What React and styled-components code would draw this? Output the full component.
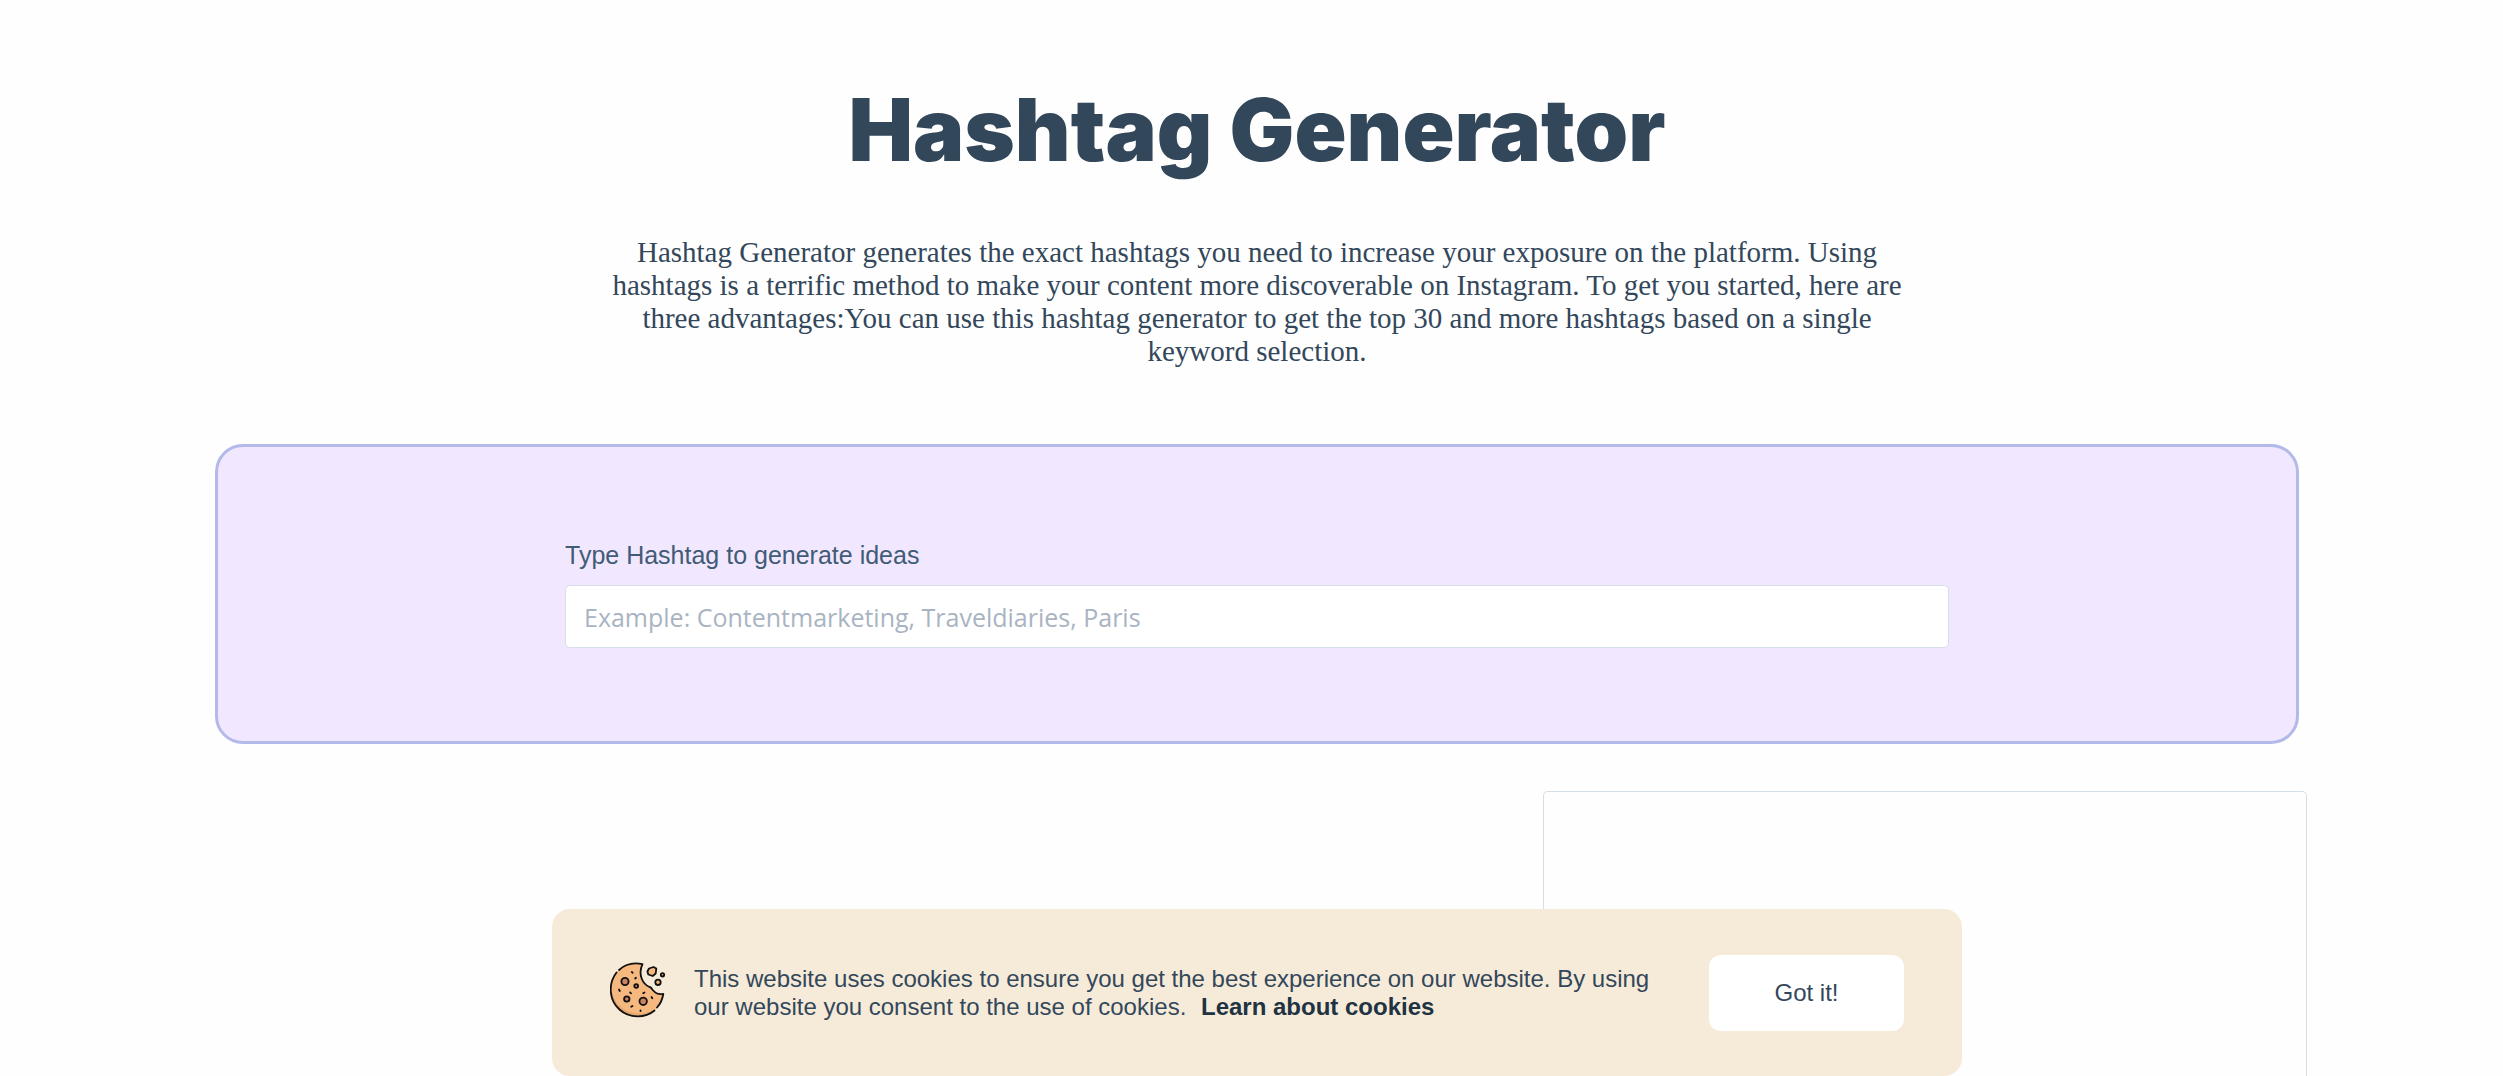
import { useState } from "react";
import styled, { createGlobalStyle } from "styled-components";

const GlobalStyle = createGlobalStyle`
  * {
    box-sizing: border-box;
  }

  body {
    margin: 0;
    background: #fefefe;
    color: #33475b;
    font-family: "Liberation Sans", Arial, sans-serif;
  }
`;

const Page = styled.div`
  height: 100vh;
  padding-left: 11px;
  display: flex;
  flex-direction: column;
  overflow: hidden;
`;

const Header = styled.header`
  display: flex;
  flex-direction: column;
  align-items: center;
  gap: 52px;
  padding: 76px 24px;
  text-align: center;
`;

const Title = styled.h1`
  margin: 0;
  font-family: Inter, "Liberation Sans", sans-serif;
  font-size: 86px;
  font-weight: 900;
  line-height: 108px;
`;

const Desc = styled.p`
  margin: 0;
  max-width: 1320px;
  font-family: "Liberation Serif", "Times New Roman", serif;
  font-size: 29px;
  line-height: 33px;
`;

const Main = styled.main`
  flex: 1;
  display: flex;
  flex-direction: column;
  gap: 47px;
  width: 100%;
  max-width: 2100px;
  margin: 0 auto;
`;

const Panel = styled.section`
  display: flex;
  justify-content: center;
  margin: 0 8px;
  padding: 92px 24px 93px;
  background: #f1e8ff;
  border: 3px solid #b3b9e8;
  border-radius: 28px;
`;

const Form = styled.form`
  display: flex;
  flex-direction: column;
  gap: 14px;
  width: 100%;
  max-width: 1384px;
`;

const Label = styled.label`
  color: #425b76;
  font-size: 25px;
  line-height: 32px;
`;

const Input = styled.input`
  width: 100%;
  height: 63px;
  padding: 4px 18px;
  border: 1px solid #d6dfe8;
  border-radius: 5px;
  background: white;
  color: #33475b;
  font-family: "Open Sans", sans-serif;
  font-size: 25px;

  &::placeholder {
    color: #a9b4c2;
    opacity: 1;
  }
`;

const Columns = styled.div`
  flex: 1;
  display: grid;
  grid-template-columns: 1fr 764px;
`;

const Results = styled.aside`
  grid-column: 2;
  border: 1px solid #d6dfe8;
  border-bottom: none;
  border-radius: 5px 5px 0 0;
`;

const CookieLayer = styled.div`
  position: fixed;
  inset: auto 0 0 11px;
  display: flex;
  justify-content: center;
`;

const CookieBar = styled.div`
  display: flex;
  align-items: center;
  width: 100%;
  max-width: 1410px;
  min-height: 167px;
  padding: 0 58px;
  border-radius: 18px;
  background: #f6ebd8;
`;

const CookieIcon = styled.svg`
  flex: none;
  width: 56px;
  height: 56px;
  margin: 0 28px 6px 0;
`;

const CookieText = styled.p`
  flex: 1;
  margin: 0;
  font-size: 24px;
  line-height: 28px;
`;

const CookieLink = styled.a`
  margin-left: 8px;
  color: #213343;
  font-weight: 700;
  text-decoration: none;
`;

const Button = styled.button`
  width: 195px;
  height: 76px;
  margin-left: 32px;
  border: none;
  border-radius: 12px;
  background: white;
  color: #33475b;
  font-family: inherit;
  font-size: 24px;
  cursor: pointer;
`;

function Cookie() {
  return (
    <CookieIcon viewBox="1 0 56 56" fill="none" aria-hidden="true">
      <path
        d="M33.5 2.2C18-1.5 3 9 1.300 25c-1.500 16 10.500 29.500 26.500 29.500C42 54.500 53 45 54.300 32c-4 .7-8-.7-10.300-3.700-1.300-1.800-1.800-3-3.500-3.300C34 22.500 28.500 12.500 33.500 2.200Z"
        fill="#f5b97f"
      />
      <path
        d="M5.500 14C1 23 2 35 10 43c9 9 23 11 34 5-13 11-31 7-39-5C-.5 34-.5 22 5.500 14Z"
        fill="#e6a873"
      />
      <g stroke="#111" strokeWidth="1.8" strokeLinecap="round" strokeLinejoin="round">
        <path d="M10 8C16 2.500 24.500.3 33.500 2.200 28.500 12.500 34 22.500 40.500 25c1.700.3 2.200 1.500 3.500 3.300 2.300 3 6.300 4.400 10.300 3.700-.8 5.200-3.100 10-6.300 13.500" />
        <path d="M45.500 48.500C36 56.500 20.500 56.500 10.500 47.500 0 38 -1.200 22 7.500 10.500" />
        <circle cx="16" cy="19.500" r="3.600" fill="#c98362" />
        <circle cx="27.200" cy="24" r="1.900" fill="#c98362" />
        <circle cx="17.800" cy="37" r="2.700" fill="#c98362" />
        <circle cx="34.200" cy="39.300" r="3.700" fill="#c98362" />
        <path d="m40 6.500 4.500-1.500 2.800 1.500-.6 5-3 2.500-4.400-1.500-.9-3Z" fill="#f5b97f" />
        <circle cx="53.500" cy="12.800" r="1.700" fill="#f5b97f" />
        <circle cx="49" cy="20.300" r="2.700" fill="#f5b97f" />
        <path d="m22.800 10 .9.700M27 15.800l-.8.700M10 27.500l.8 1.500M21.200 30.500l.8.800M35.500 30.500l-1.300.8M42.500 35l.8 1.300M23.500 44l-1.300.8M31.500 48.300v.8" />
      </g>
    </CookieIcon>
  );
}

export default function App() {
  const [keyword, setKeyword] = useState("");
  const [accepted, setAccepted] = useState(false);

  return (
    <Page>
      <GlobalStyle />
      <Header>
        <Title>Hashtag Generator</Title>
        <Desc>
          Hashtag Generator generates the exact hashtags you need to increase
          your exposure on the platform. Using hashtags is a terrific method to
          make your content more discoverable on Instagram. To get you started,
          here are three advantages:You can use this hashtag generator to get
          the top 30 and more hashtags based on a single keyword selection.
        </Desc>
      </Header>

      <Main>
        <Panel>
          <Form onSubmit={(e) => e.preventDefault()}>
            <Label htmlFor="keyword">Type Hashtag to generate ideas</Label>
            <Input
              id="keyword"
              type="text"
              placeholder="Example: Contentmarketing, Traveldiaries, Paris"
              value={keyword}
              onChange={(e) => setKeyword(e.target.value)}
            />
          </Form>
        </Panel>

        <Columns>
          <Results />
        </Columns>
      </Main>

      {!accepted && (
        <CookieLayer>
          <CookieBar>
            <Cookie />
            <CookieText>
              This website uses cookies to ensure you get the best experience on
              our website. By using our website you consent to the use of
              cookies. <CookieLink href="#cookies">Learn about cookies</CookieLink>
            </CookieText>
            <Button type="button" onClick={() => setAccepted(true)}>
              Got it!
            </Button>
          </CookieBar>
        </CookieLayer>
      )}
    </Page>
  );
}
